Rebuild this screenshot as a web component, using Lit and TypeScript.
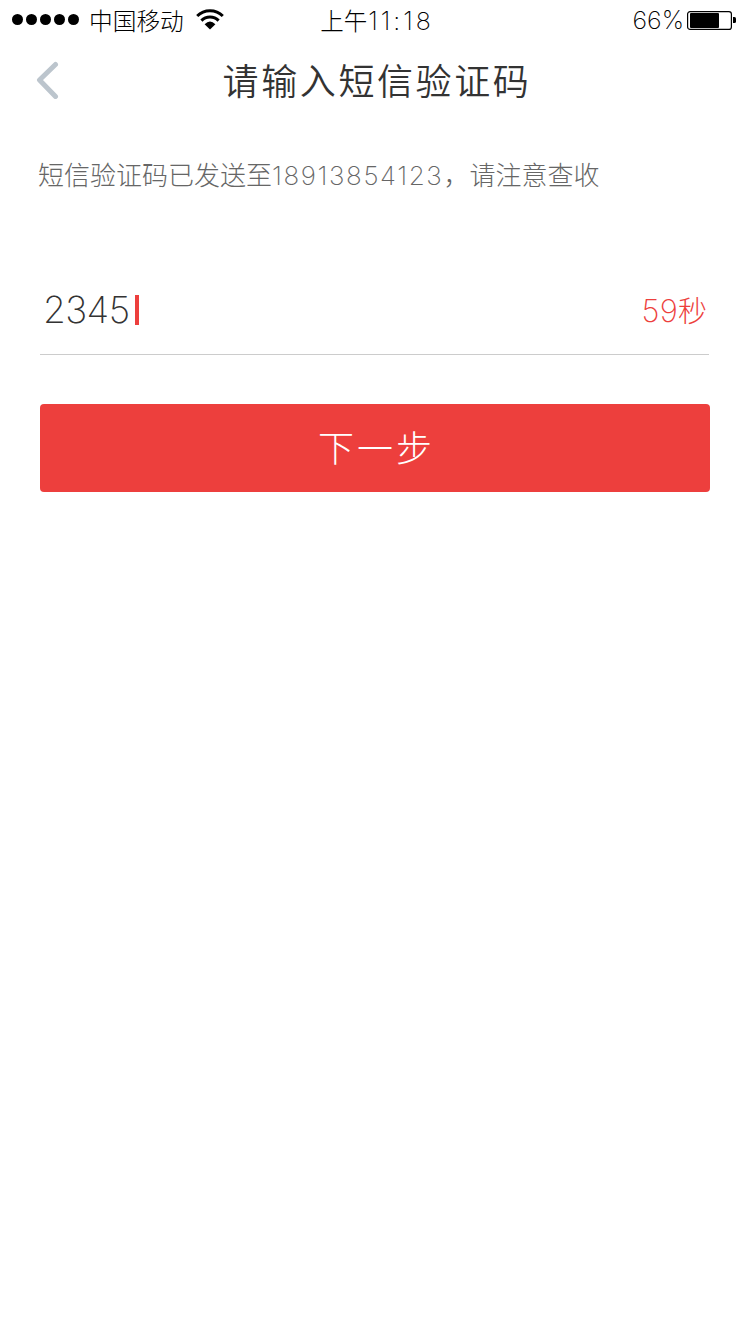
import { LitElement, html, css } from "lit";
import { customElement, state } from "lit/decorators.js";

@customElement("app-root")
export class AppRoot extends LitElement {
  static styles = css`
    :host {
      display: block;
      min-height: 1334px;
      background: #fff;
      color: #333;
      font-family: "Noto Sans CJK SC", sans-serif;
      font-weight: 300;
    }
    .num {
      font-family: "Inter", "Noto Sans CJK SC", sans-serif;
      font-weight: 250;
      font-feature-settings: "calt" 0;
    }
    .status {
      display: grid;
      grid-template-columns: 1fr auto 1fr;
      align-items: center;
      height: 39px;
      padding: 0 14px 0 12px;
      color: #000;
      font-size: 24px;
      line-height: 38px;
      white-space: nowrap;
    }
    .left, .right { display: flex; align-items: center; }
    .right { justify-content: flex-end; }
    .dots { display: flex; gap: 3px; margin: -1px 10px 0 0; }
    .dot { width: 11px; height: 11px; border-radius: 50%; background: #000; }
    .carrier { font-size: 23.7px; margin-right: 12px; line-height: 36px; padding-bottom: 1px; }
    .time { font-size: 23.5px; padding: 1px 0 0 6px; }
    .time .num { font-size: 25px; letter-spacing: 3px; margin-left: 1px; }
    .percent { font-size: 25px; letter-spacing: 0; margin-right: 3px; }
    svg { display: block; }
    .left svg { margin-top: -2px; }
    .nav {
      display: grid;
      grid-template-columns: 60px 1fr 60px;
      align-items: center;
      height: 82px;
    }
    .back { padding: 0 0 0 35px; border: 0; background: none; }
    .title {
      margin: -2px 0 0;
      padding-left: 4px;
      text-align: center;
      font-size: 36px;
      font-weight: 350;
      line-height: 80px;
      letter-spacing: 2.6px;
    }
    .hint {
      margin: 34px 0 0 38px;
      color: #666;
      font-size: 26px;
      line-height: 38px;
      white-space: nowrap;
    }
    .hint .num { letter-spacing: 1.6px; }
    .field {
      display: flex;
      align-items: center;
      justify-content: space-between;
      box-sizing: border-box;
      height: 90px;
      margin: 70px 41px 0 40px;
      padding: 0 2px 0 3px;
      border-bottom: 1px solid #ccc;
    }
    .code { display: flex; align-items: center; font-size: 37px; }
    .code .num { letter-spacing: -0.6px; }
    .caret { width: 4px; height: 30px; margin-left: 6px; background: #ed3f3d; }
    .timer { color: #ed3f3d; font-size: 29px; padding-bottom: 1px; }
    .timer .num { font-size: 31px; letter-spacing: 0.2px; }
    .next {
      display: block;
      width: 670px;
      height: 88px;
      margin: 49px 40px 0;
      padding: 0 0 5px 3px;
      border: 0;
      border-radius: 4px;
      background: #ed3f3d;
      color: #fff;
      font: inherit;
      font-size: 36px;
      letter-spacing: 3px;
    }
  `;

  @state() private code = "2345";
  @state() private seconds = 59;

  render() {
    return html`
      <div class="status">
        <div class="left">
          <div class="dots">${[0, 1, 2, 3, 4].map(() => html`<span class="dot"></span>`)}</div>
          <span class="carrier">中国移动</span>
          <svg width="28" height="22" viewBox="0 0 28 22" fill="none" stroke="#000" stroke-width="3">
            <path d="M1.2 8A18 18 0 0 1 26.8 8" />
            <path d="M5.4 12.6A12.1 12.1 0 0 1 22.6 12.6" />
            <path d="M14 21.4L8.6 16.2Q14 10.6 19.4 16.2Z" fill="#000" stroke="none" />
          </svg>
        </div>
        <div class="time">上午<span class="num">11:18</span></div>
        <div class="right">
          <span class="percent num">66%</span>
          <svg width="49" height="19" viewBox="0 0 49 19">
            <rect x=".6" y=".6" width="43.8" height="17.8" rx="2.5" fill="none" stroke="#000" stroke-width="1.2" />
            <rect x="3" y="2" width="29" height="15" rx="1" />
            <path d="M46 6h1.5a1.5 1.5 0 0 1 1.5 1.5v3a1.5 1.5 0 0 1-1.5 1.5H46z" />
          </svg>
        </div>
      </div>
      <header class="nav">
        <button class="back" aria-label="返回">
          <svg width="24" height="38" viewBox="0 0 24 38" fill="none" stroke="#bcc5cd" stroke-width="5" stroke-linecap="round" stroke-linejoin="round">
            <path d="M20.5 3.5L4.5 19L20.5 35.5" />
          </svg>
        </button>
        <h1 class="title">请输入短信验证码</h1>
      </header>
      <p class="hint">短信验证码已发送至<span class="num">18913854123</span>，请注意查收</p>
      <div class="field">
        <div class="code"><span class="num">${this.code}</span><span class="caret"></span></div>
        <div class="timer"><span class="num">${this.seconds}</span>秒</div>
      </div>
      <button class="next">下一步</button>
    `;
  }
}
